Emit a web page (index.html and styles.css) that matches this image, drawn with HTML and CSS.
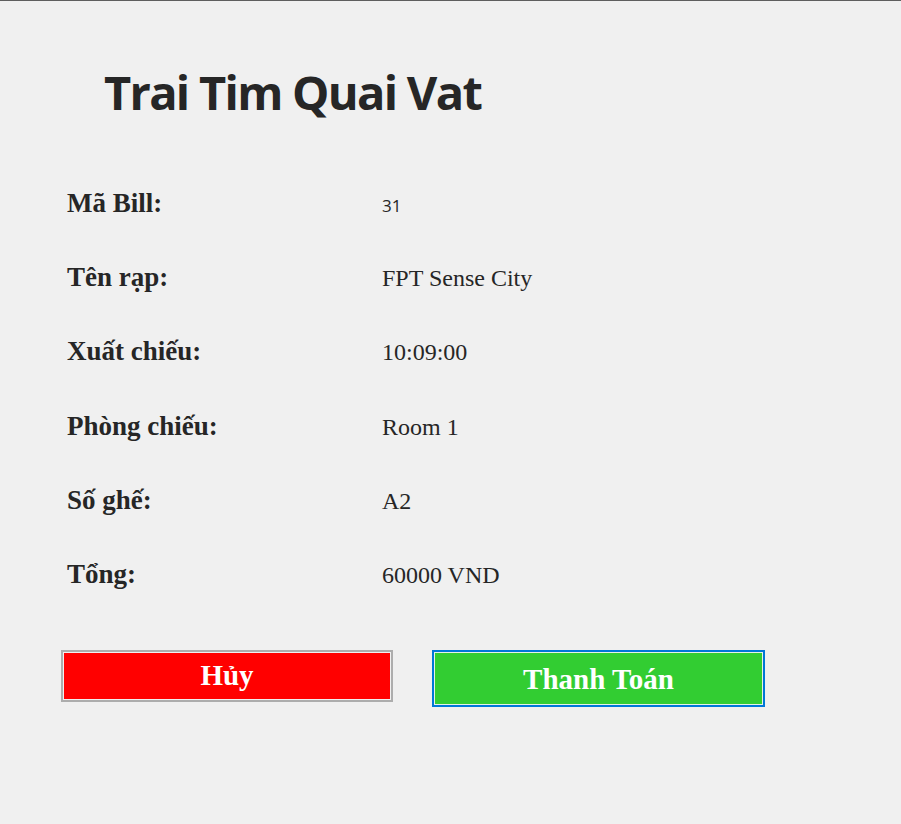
FILE: index.html
```html
<!DOCTYPE html>
<html lang="vi">
<head>
<meta charset="utf-8">
<title>Bill</title>
<link rel="stylesheet" href="styles.css">
</head>
<body>
<div class="page">
  <h1 class="title">Trai Tim Quai Vat</h1>
  <div class="bill">
    <div class="label">Mã Bill:</div><div class="value value-sans">31</div>
    <div class="label">Tên rạp:</div><div class="value">FPT Sense City</div>
    <div class="label">Xuất chiếu:</div><div class="value">10:09:00</div>
    <div class="label">Phòng chiếu:</div><div class="value">Room 1</div>
    <div class="label">Số ghế:</div><div class="value">A2</div>
    <div class="label">Tổng:</div><div class="value">60000 VND</div>
  </div>
  <div class="actions">
    <button class="btn btn-cancel">Hủy</button>
    <button class="btn btn-pay">Thanh Toán</button>
  </div>
</div>
</body>
</html>
```
FILE: styles.css
```css
html, body {
  margin: 0;
  padding: 0;
  background: #f0f0f0;
}
.page {
  border-top: 1px solid #5e5e5e;
  min-height: 823px;
  box-sizing: border-box;
  color: #262626;
}
.title {
  margin: 61px 0 0 104px;
  font-family: "Open Sans", "Noto Sans", sans-serif;
  font-weight: 700;
  font-size: 47px;
  line-height: 60px;
  letter-spacing: -1.7px;
  color: #262626;
}
.bill {
  display: grid;
  grid-template-columns: 315px auto;
  grid-auto-rows: 30px;
  row-gap: 44.2px;
  align-items: baseline;
  margin: 66px 0 0 67px;
}
.label {
  font-family: "Liberation Serif", "Times New Roman", serif;
  font-weight: 700;
  font-size: 27px;
  line-height: 30px;
}
.value {
  font-family: "Liberation Serif", "Times New Roman", serif;
  font-size: 24px;
  line-height: 30px;
}
.value-sans {
  font-family: "Open Sans", "Noto Sans", sans-serif;
  font-size: 17px;
}
.actions {
  display: flex;
  align-items: flex-start;
  gap: 39px;
  margin: 61px 0 0 61px;
}
.btn {
  box-sizing: border-box;
  width: 332px;
  padding: 0;
  font-family: "Liberation Serif", "Times New Roman", serif;
  font-weight: 700;
  font-size: 29px;
  color: #ffffff;
  cursor: pointer;
}
.btn-cancel {
  height: 52px;
  background: #ff0000;
  border: 2px solid #adadad;
  box-shadow: inset 0 0 0 1px #f0f0f0;
}
.btn-pay {
  width: 333px;
  height: 57px;
  background: #32cd32;
  border: 2px solid #0078d7;
  box-shadow: inset 0 0 0 1px #e6f2e6;
  padding-top: 2px;
}
```
